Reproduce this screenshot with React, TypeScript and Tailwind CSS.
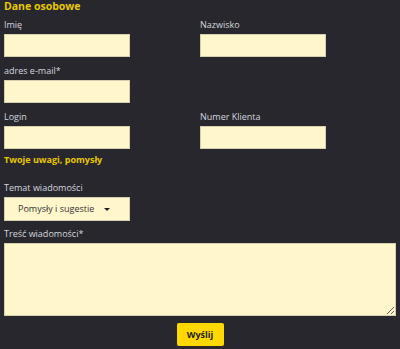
import { useState } from 'react'

const inputCls =
  'block h-[23px] w-[126px] border border-[#d6cfae] bg-[#fff6cc] px-1 text-[9px] text-[#333] outline-none'

function Field({ label, className = '' }: { label: string; className?: string }) {
  return (
    <label className={'block ' + className}>
      <span className="mb-[3px] block text-[9px] leading-[12px] text-[#d6d6de]">{label}</span>
      <input className={inputCls} />
    </label>
  )
}

export default function App() {
  const [topic] = useState('Pomysły i sugestie')

  return (
    <div
      className="h-[349px] w-[400px] overflow-hidden bg-[#27272d] px-[4px]"
      style={{ fontFamily: '"Open Sans", "Noto Sans", sans-serif' }}
    >
      <h2 className="text-[10.5px] font-bold leading-[12px] text-[#e8c900]">Dane osobowe</h2>

      <div className="mt-[7px] grid grid-cols-[196px_1fr] gap-y-[8px]">
        <Field label="Imię" />
        <Field label="Nazwisko" />
        <Field label="adres e-mail*" className="col-span-2" />
        <Field label="Login" />
        <Field label="Numer Klienta" />
      </div>

      <h2 className="mt-[5px] text-[9px] font-bold leading-[12px] text-[#e8c900]">
        Twoje uwagi, pomysły
      </h2>

      <div className="mt-[16px]">
        <span className="mb-[3px] block text-[9px] leading-[12px] text-[#d6d6de]">Temat wiadomości</span>
        <div className="flex h-[24px] w-[126px] items-center border border-[#d6cfae] bg-[#fff6cc] pl-[13px] pr-[19px] text-[9px] text-[#333]">
          <span className="flex-1">{topic}</span>
          <span className="h-0 w-0 border-x-[3px] border-t-[3px] border-x-transparent border-t-[#222]" />
        </div>
      </div>

      <div className="mt-[7px]">
        <span className="mb-[3px] block text-[9px] leading-[12px] text-[#d6d6de]">Treść wiadomości*</span>
        <textarea className="block h-[73px] w-[392px] border border-[#d6cfae] bg-[#fff6cc] p-1 text-[9px] text-[#333] outline-none" />
      </div>

      <div className="mt-[7px] flex justify-center">
        <button className="h-[23px] w-[47px] rounded-[2px] bg-[#ffd800] text-[9px] font-bold text-[#222]">
          Wyślij
        </button>
      </div>
    </div>
  )
}
